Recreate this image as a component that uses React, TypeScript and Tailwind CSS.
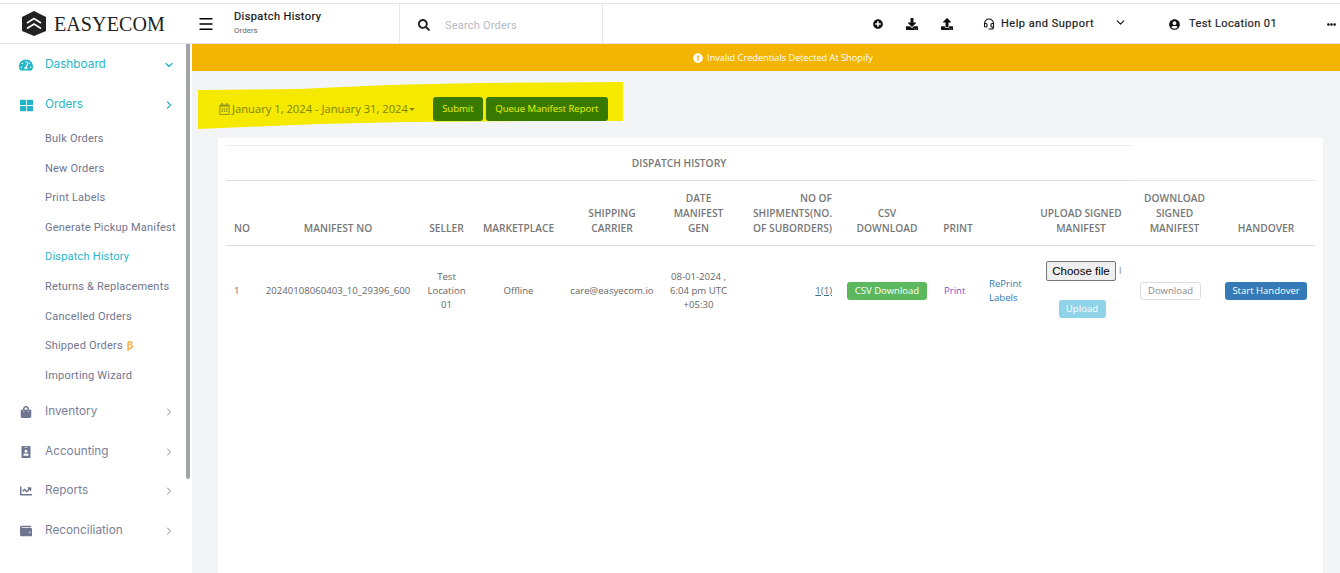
import React from "react";
import { ChevronDown, ChevronRight, Headset, Menu } from "lucide-react";
import {
  FaChartLine,
  FaDownload,
  FaEllipsisH,
  FaExclamationCircle,
  FaIdBadge,
  FaPlusCircle,
  FaRegCalendarAlt,
  FaSearch,
  FaShoppingBag,
  FaTachometerAlt,
  FaThLarge,
  FaUpload,
  FaUserCircle,
  FaWallet,
} from "react-icons/fa";

const subItems = [
  "Bulk Orders",
  "New Orders",
  "Print Labels",
  "Generate Pickup Manifest",
  "Dispatch History",
  "Returns & Replacements",
  "Cancelled Orders",
  "Shipped Orders",
  "Importing Wizard",
];

const lowerItems = [
  { label: "Inventory", icon: FaShoppingBag },
  { label: "Accounting", icon: FaIdBadge },
  { label: "Reports", icon: FaChartLine },
  { label: "Reconciliation", icon: FaWallet },
];

const colWidths = [32, 160, 57, 87, 100, 73, 104, 96, 46, 49, 102, 85, 98];

const Logo = () => (
  <svg width="24" height="25" viewBox="0 0 24 25" className="shrink-0">
    <path d="M12 0 L24 6 V20 L12 25 L0 20 V6 Z" fill="#222222" />
    <path d="M5 12 L12 7.5 L19 12 M5 17.5 L12 13 L19 17.5" fill="none" stroke="#ffffff" strokeWidth="1.5" />
  </svg>
);

const Sidebar = () => (
  <aside className="relative w-[192px] shrink-0 bg-white font-['Inter',sans-serif]">
    <div className="absolute left-[186px] top-0 h-[435px] w-[4px] rounded-b bg-[#a0a5aa]" />
    <div className="flex h-[40px] items-center pl-[19px] pr-[17px] pt-[2px] text-[11.8px] text-[#1fb6c9]">
      <FaTachometerAlt className="h-[14px] w-[14px]" />
      <span className="ml-[12px] flex-1">Dashboard</span>
      <ChevronDown className="h-[12px] w-[12px]" strokeWidth={2.5} />
    </div>
    <div className="flex h-[40px] items-center pl-[20px] pr-[17px] pt-[2px] text-[11.8px] text-[#1fb6c9]">
      <FaThLarge className="h-[13px] w-[13px]" />
      <span className="ml-[12px] flex-1">Orders</span>
      <ChevronRight className="h-[12px] w-[12px]" strokeWidth={2.5} />
    </div>
    <ul className="pt-[0.5px] font-['Roboto',sans-serif] text-[11px] tracking-[0.2px] text-[#6f7590]">
      {subItems.map((item) => (
        <li
          key={item}
          className={`flex h-[29.6px] items-center pl-[45px] ${item === "Dispatch History" ? "text-[#1fb6c9]" : ""}`}
        >
          {item}
          {item === "Shipped Orders" && <span className="ml-[4px] font-bold text-[#f9b13c]">β</span>}
        </li>
      ))}
    </ul>
    <div className="pt-[1.5px]">
      {lowerItems.map(({ label, icon: Icon }) => (
        <div key={label} className="flex h-[39.6px] items-center pl-[20px] pr-[17px] text-[11.8px] text-[#7a7f99]">
          <Icon className="h-[12px] w-[12px] text-[#6f7590]" />
          <span className="ml-[13px] flex-1">{label}</span>
          <ChevronRight className="h-[12px] w-[12px]" strokeWidth={2} />
        </div>
      ))}
    </div>
  </aside>
);

const Header = () => (
  <header className="flex h-[40px] shrink-0 items-center border-b border-[#e4e4e4] bg-white font-['Roboto',sans-serif]">
    <div className="flex w-[197px] items-center pl-[22px]">
      <Logo />
      <span className="ml-[8px] font-['Liberation_Serif',serif] text-[20px] tracking-[0.1px] text-[#222222]">EASYECOM</span>
    </div>
    <Menu className="h-[18px] w-[18px] text-black" strokeWidth={1.8} />
    <div className="ml-[19px] w-[165px]">
      <div className="text-[11px] leading-[14px] tracking-[0.4px] text-[#111111] [-webkit-text-stroke:0.2px]">Dispatch History</div>
      <div className="pt-[1px] text-[8px] leading-[12px] text-[#666666]">Orders</div>
    </div>
    <div className="flex h-full w-[204px] items-center border-x border-[#e8e8e8] pl-[18px] pt-[3px]">
      <FaSearch className="h-[12px] w-[12px] text-[#222222]" />
      <span className="ml-[15px] pt-[2px] text-[11px] tracking-[0.2px] text-[#b4b8c0]">Search Orders</span>
    </div>
    <div className="ml-[270px] flex items-center pt-[1px] text-[#111111]">
      <FaPlusCircle className="h-[10px] w-[10px]" />
      <FaDownload className="ml-[23px] h-[12px] w-[12px]" />
      <FaUpload className="ml-[23px] h-[12px] w-[12px]" />
      <Headset className="ml-[30px] h-[12px] w-[12px]" strokeWidth={2.2} />
      <span className="ml-[6px] text-[11px] tracking-[0.5px] text-[#222222] [-webkit-text-stroke:0.2px]">Help and Support</span>
      <ChevronDown className="ml-[20px] mt-[-3px] h-[13px] w-[13px]" strokeWidth={2} />
      <FaUserCircle className="ml-[42px] h-[11px] w-[11px]" />
      <span className="ml-[9px] pt-[1px] text-[11px] tracking-[0.4px] text-[#222222] [-webkit-text-stroke:0.2px]">Test Location 01</span>
      <FaEllipsisH className="ml-[50px] h-[9px] w-[9px]" />
    </div>
  </header>
);

const Toolbar = () => (
  <div className="relative mt-[11px] ml-[6px] h-[48px] w-[426px]">
    {/* marker highlight over the date range */}
    <svg className="absolute inset-0" width="426" height="48" viewBox="0 0 426 48">
      <path d="M0 8 L100 7 L190 3 L280 1 L425 0 L425 39 L330 39 L210 40 L120 42 L0 47 Z" fill="#f5e900" />
    </svg>
    <div className="relative flex h-full items-center pl-[21px] pt-[6px] font-['Open_Sans',sans-serif] text-[11px]">
      <FaRegCalendarAlt className="h-[12px] w-[11px] text-[#9a9a10]" />
      <span className="ml-[2px] text-[11.2px] text-[#808400]">January 1, 2024 - January 31, 2024</span>
      <span className="ml-[1px] h-0 w-0 border-x-[3.5px] border-t-[3.5px] border-x-transparent border-t-[#8b8a12]" />
      <button className="ml-[18px] h-[24px] w-[50px] rounded-[3px] bg-[#387a00] text-[9.5px] text-[#eef500]">Submit</button>
      <button className="ml-[3px] h-[24px] w-[122px] rounded-[3px] bg-[#387a00] text-[9.5px] text-[#eef500]">Queue Manifest Report</button>
    </div>
  </div>
);

const headers: { label: React.ReactNode; className?: string }[] = [
  { label: "NO", className: "text-left pl-[8px]" },
  { label: "MANIFEST NO" },
  { label: "SELLER" },
  { label: "MARKETPLACE" },
  { label: <>SHIPPING<br />CARRIER</> },
  { label: <>DATE<br />MANIFEST<br />GEN</> },
  { label: <>NO OF<br />SHIPMENTS(NO.<br />OF SUBORDERS)</>, className: "text-right pr-[7px]" },
  { label: <>CSV<br />DOWNLOAD</> },
  { label: "PRINT" },
  { label: "" },
  { label: <>UPLOAD SIGNED<br />MANIFEST</> },
  { label: <>DOWNLOAD<br />SIGNED<br />MANIFEST</> },
  { label: "HANDOVER" },
];

const DispatchTable = () => (
  <div className="mt-[8px] ml-[26px] h-[450px] w-[1105px] bg-white px-[8px] pt-[7px] font-['Open_Sans',sans-serif]">
    <table className="w-[1089px] table-fixed border-collapse text-[9.6px] text-[#666666]">
      <colgroup>
        {colWidths.map((w, i) => (
          <col key={i} style={{ width: w }} />
        ))}
      </colgroup>
      <thead className="text-[10.2px] leading-[15px] font-semibold text-[#777777]">
        <tr className="h-[35px]">
          <th colSpan={11} className="border-y border-t-[#eeeeee] border-b-[#dddddd] text-center font-semibold">
            DISPATCH HISTORY
          </th>
          <th colSpan={2} className="border-b border-[#e6e6e6]" />
        </tr>
        <tr className="h-[65px] border-b border-[#dddddd]">
          {headers.map((h, i) => (
            <th key={i} className={`whitespace-nowrap px-0 pb-[9px] align-bottom font-semibold ${h.className ?? "text-center"}`}>
              {h.label}
            </th>
          ))}
        </tr>
      </thead>
      <tbody className="leading-[14px]">
        <tr className="h-[90px] text-center">
          <td className="pl-[8px] text-left text-[#8a5a78]">1</td>
          <td className="whitespace-nowrap">20240108060403_10_29396_600</td>
          <td className="px-[6px]">Test Location 01</td>
          <td>Offline</td>
          <td>care@easyecom.io</td>
          <td className="px-[6px]">08-01-2024 , 6:04 pm UTC +05:30</td>
          <td className="pr-[7px] text-right">
            <a className="text-[#3b6f90] underline">1(1)</a>
          </td>
          <td>
            <button className="h-[18px] w-[80px] rounded-[3px] bg-[#5cb85c] text-[9.5px] text-white">CSV Download</button>
          </td>
          <td className="text-left pl-[9px] text-[#7b4fd0]">Print</td>
          <td className="text-left pl-[8px] text-[#337ab7]">RePrint Labels</td>
          <td className="align-top pt-[15px]">
            <div className="flex items-center pl-[16px]">
              <span className="flex h-[20px] w-[70px] items-center justify-center rounded-[2px] border border-[#767676] bg-[#efefef] font-['Liberation_Sans',sans-serif] text-[11.5px] text-black">
                Choose file
              </span>
              <span className="ml-[3px] text-[#888888]">l</span>
            </div>
            <button className="mt-[19px] ml-[2px] h-[18px] w-[47px] rounded-[3px] bg-[#8fd3e8] text-[9.6px] text-white">Upload</button>
          </td>
          <td>
            <button className="ml-[-8px] h-[18px] w-[61px] rounded-[3px] border border-[#dddddd] bg-white text-[9.5px] text-[#888888]">Download</button>
          </td>
          <td>
            <button className="h-[18px] w-[82px] rounded-[3px] bg-[#337ab7] text-[9.5px] text-white">Start Handover</button>
          </td>
        </tr>
      </tbody>
    </table>
  </div>
);

export default function App() {
  return (
    <div className="h-[573px] w-[1340px] overflow-hidden bg-white">
      <div className="h-[4px] border-b border-[#e4e4e4]" />
      <Header />
      <div className="flex h-[529px]">
        <Sidebar />
        <main className="flex-1 bg-[#f3f4f6]">
          <div className="flex h-[27px] items-center justify-center bg-[#f4b404] pl-[34px] pt-[1px] font-['Open_Sans',sans-serif] text-[9.2px] text-white">
            <FaExclamationCircle className="mr-[4px] h-[10px] w-[10px]" />
            Invalid Credentials Detected At Shopify
          </div>
          <Toolbar />
          <DispatchTable />
        </main>
      </div>
    </div>
  );
}
